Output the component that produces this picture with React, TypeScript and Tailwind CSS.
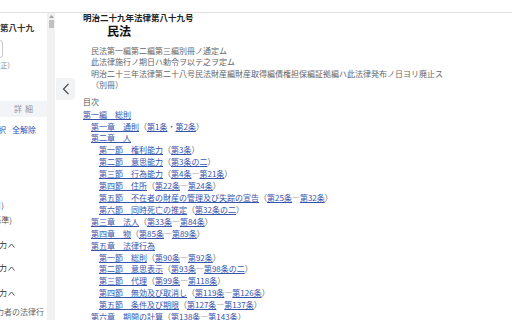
import React from 'react';

type Ref = string[];
type Item = { lv: number; t: string; r?: Ref };

const toc: Item[] = [
  { lv: 0, t: '第一編　総則' },
  { lv: 1, t: '第一章　通則', r: ['第1条', '・', '第2条'] },
  { lv: 1, t: '第二章　人' },
  { lv: 2, t: '第一節　権利能力', r: ['第3条'] },
  { lv: 2, t: '第二節　意思能力', r: ['第3条の二'] },
  { lv: 2, t: '第三節　行為能力', r: ['第4条', '―', '第21条'] },
  { lv: 2, t: '第四節　住所', r: ['第22条', '―', '第24条'] },
  { lv: 2, t: '第五節　不在者の財産の管理及び失踪の宣告', r: ['第25条', '―', '第32条'] },
  { lv: 2, t: '第六節　同時死亡の推定', r: ['第32条の二'] },
  { lv: 1, t: '第三章　法人', r: ['第33条', '―', '第84条'] },
  { lv: 1, t: '第四章　物', r: ['第85条', '―', '第89条'] },
  { lv: 1, t: '第五章　法律行為' },
  { lv: 2, t: '第一節　総則', r: ['第90条', '―', '第92条'] },
  { lv: 2, t: '第二節　意思表示', r: ['第93条', '―', '第98条の二'] },
  { lv: 2, t: '第三節　代理', r: ['第99条', '―', '第118条'] },
  { lv: 2, t: '第四節　無効及び取消し', r: ['第119条', '―', '第126条'] },
  { lv: 2, t: '第五節　条件及び期限', r: ['第127条', '―', '第137条'] },
  { lv: 1, t: '第六章　期間の計算', r: ['第138条', '―', '第143条'] },
];

const indent = ['pl-0', 'pl-2', 'pl-4'];
const link = 'text-[#3654ad] underline underline-offset-[1px] decoration-[#3654ad]';

function ChevronUp() {
  return (
    <svg width="7" height="5" viewBox="0 0 7 5" className="ml-[1px] shrink-0">
      <polyline points="0.5,4.5 3.5,1 6.5,4.5" fill="none" stroke="#555" strokeWidth="1" />
    </svg>
  );
}

function Sidebar() {
  return (
    <aside className="w-[47px] shrink-0 overflow-hidden text-[8px] text-[#444]">
      <div className="mt-[8px] h-[12px] flex items-center justify-end pr-[13px] whitespace-nowrap font-bold text-[8.5px] text-[#333]">
        <span className="shrink-0">明治二十九年法律第八十九</span>
      </div>
      <div className="mt-[7px] h-[18px] flex justify-end pr-[44px]">
        <div className="shrink-0 w-[40px] h-[18px] border border-[#c9c9c9] rounded-[3px]" />
      </div>
      <div className="mt-[2px] h-[10px] flex items-center justify-end pr-[37px] whitespace-nowrap text-[7px] text-[#888]">
        <span className="shrink-0">施行日（改正)</span>
      </div>
      <div className="mt-[31px] h-[16px] bg-[#f3f4f7] flex items-center pl-[14px] text-[#8b95ab] tracking-[3px] whitespace-nowrap">
        詳細
      </div>
      <div className="mt-[7px] h-[12px] flex items-center justify-end pr-[11px] whitespace-nowrap text-[#2c52b3]">
        <span className="shrink-0">全選択</span>
        <span className="shrink-0 ml-[6px]">全解除</span>
      </div>
      <div className="mt-[63px] h-[12px] flex items-center justify-end pr-[43px] whitespace-nowrap text-[#555]">
        <span className="shrink-0">（施行日)</span>
      </div>
      <div className="mt-[3px] h-[12px] flex items-center justify-end pr-[35px] whitespace-nowrap text-[#555]">
        <span className="shrink-0">（基準)</span>
      </div>
      {['mt-[13px]', 'mt-[11px]', 'mt-[13px]'].map((m, i) => (
        <div key={i} className={`${m} h-[12px] flex items-center justify-end pr-[32px] whitespace-nowrap text-[#333]`}>
          <span className="shrink-0">改正法の効力</span>
          <ChevronUp />
        </div>
      ))}
      <div className="mt-[7px] h-[12px] flex items-center justify-end pr-[3px] whitespace-nowrap text-[#666]">
        <span className="shrink-0">制限行為能力者の法律行</span>
      </div>
    </aside>
  );
}

function Scrollbar() {
  return (
    <div className="w-[8px] shrink-0 bg-[#f1f1f1] flex flex-col items-center">
      <svg width="5" height="3" viewBox="0 0 5 3" className="mt-[2px]">
        <polygon points="0,3 2.5,0 5,3" fill="#a3a3a3" />
      </svg>
      <div className="mt-[2px] w-[5px] h-[8px] bg-[#c1c1c1]" />
    </div>
  );
}

export default function App() {
  return (
    <div className="w-[512px] h-[320px] overflow-hidden bg-white flex flex-col font-['Noto_Sans_CJK_JP',sans-serif]">
      <div className="h-[13px] shrink-0 border-b border-[#e2e2e2]" />
      <div className="flex flex-1 min-h-0">
        <Sidebar />
        <Scrollbar />
        <main className="relative flex-1 pl-[28px] text-[8px] text-[#555] whitespace-nowrap">
          <button className="absolute left-[1px] top-[65px] w-[19px] h-[22px] bg-[#f2f3f5] rounded-r-[4px] flex items-center justify-center">
            <svg width="8" height="12" viewBox="0 0 8 12">
              <polyline points="6.5,0.8 1.5,6 6.5,11.2" fill="none" stroke="#444" strokeWidth="1.2" />
            </svg>
          </button>
          <div className="leading-[8px] font-bold text-[8.5px] text-[#222]">明治二十九年法律第八十九号</div>
          <div className="mt-[3px] pl-[24px] leading-[14px] font-bold text-[12px] text-[#111]">民法</div>
          <div className="mt-[7px] pl-2 leading-[11.4px] text-[#666]">
            <div>民法第一編第二編第三編別冊ノ通定ム</div>
            <div>此法律施行ノ期日ハ勅令ヲ以テ之ヲ定ム</div>
            <div>明治二十三年法律第二十八号民法財産編財産取得編債権担保編証拠編ハ此法律発布ノ日ヨリ廃止ス</div>
            <div>（別冊）</div>
          </div>
          <div className="mt-[5px] leading-[12px] text-[#555]">目次</div>
          <div className="mt-[1px] leading-[11.9px]">
            {toc.map((it, i) => (
              <div key={i} className={indent[it.lv]}>
                <span className={link}>{it.t}</span>
                {it.r && (
                  <span className="text-[#666]">
                    （
                    {it.r.map((p, j) =>
                      p === '・' || p === '―' ? (
                        <span key={j}>{p}</span>
                      ) : (
                        <span key={j} className={link}>
                          {p}
                        </span>
                      )
                    )}
                    ）
                  </span>
                )}
              </div>
            ))}
          </div>
        </main>
      </div>
    </div>
  );
}
